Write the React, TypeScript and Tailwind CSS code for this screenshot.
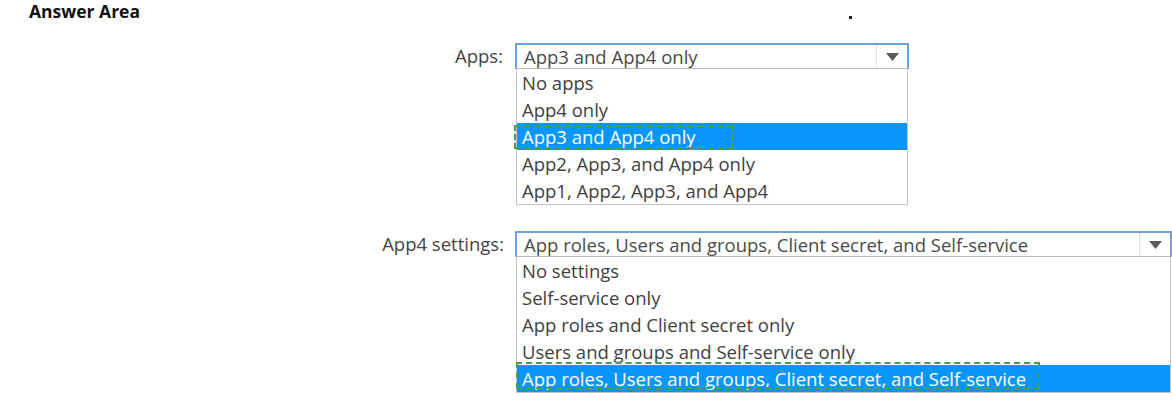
const apps = [
  "No apps",
  "App4 only",
  "App3 and App4 only",
  "App2, App3, and App4 only",
  "App1, App2, App3, and App4",
]

const settings = [
  "No settings",
  "Self-service only",
  "App roles and Client secret only",
  "Users and groups and Self-service only",
  "App roles, Users and groups, Client secret, and Self-service",
]

function Arrow() {
  return (
    <svg width="13" height="8" viewBox="0 0 13 8">
      <path d="M0 0 H13 L6.5 8 Z" fill="#5a5a5a" />
    </svg>
  )
}

interface DropdownProps {
  options: string[]
  selected: number
  boxClass: string
  markClass: string
}

function Dropdown({ options, selected, boxClass, markClass }: DropdownProps) {
  return (
    <div className={boxClass}>
      <div className="flex h-[26px] border-2 border-b border-[#6f9fe0] border-b-[#b9b9b9] bg-white">
        <div className="flex-1 truncate pl-[7px] leading-[23px] text-[#4a4a4a]">{options[selected]}</div>
        <div className="flex w-[31px] items-center justify-center border-l border-dotted border-[#e3b8e3]">
          <Arrow />
        </div>
      </div>
      <div className="mx-[1px] border border-t-0 border-[#c4c4c4] bg-white">
        {options.map((o, i) => (
          <div
            key={o}
            className={
              i === selected
                ? "relative h-[27px] bg-[#0896f8] pl-[5px] leading-[27px] text-white"
                : "h-[27px] pl-[5px] leading-[27px] text-[#3f3f3f]"
            }
          >
            {o}
            {i === selected && <div className={markClass} />}
          </div>
        ))}
      </div>
    </div>
  )
}

export default function App() {
  return (
    <div className="h-[407px] w-[1172px] overflow-hidden bg-white font-['Open_Sans','Noto_Sans',sans-serif] text-[18.5px]">
      <div className="flex items-start pl-[29px]">
        <div className="text-[17.5px] leading-[22px] font-bold text-[#111]">Answer Area</div>
        <div className="ml-[709px] mt-[16px] h-[3px] w-[3px] bg-[#222]" />
      </div>

      <div className="mt-[21px] flex items-start">
        <div className="w-[503px] text-right leading-[26px] text-[#444]">Apps:</div>
        <Dropdown
          options={apps}
          selected={2}
          boxClass="ml-[12px] w-[394px]"
          markClass="absolute -left-[3px] top-[2px] h-[24px] w-[220px] border-2 border-dashed border-[#4aa04a]"
        />
      </div>

      <div className="mt-[26px] flex items-start">
        <div className="w-[504px] text-right leading-[26px] text-[#444]">App4 settings:</div>
        <Dropdown
          options={settings}
          selected={4}
          boxClass="ml-[11px] w-[657px]"
          markClass="absolute -left-[1px] -top-[3px] h-[27px] w-[524px] border-2 border-dashed border-[#4aa04a]"
        />
      </div>
    </div>
  )
}
